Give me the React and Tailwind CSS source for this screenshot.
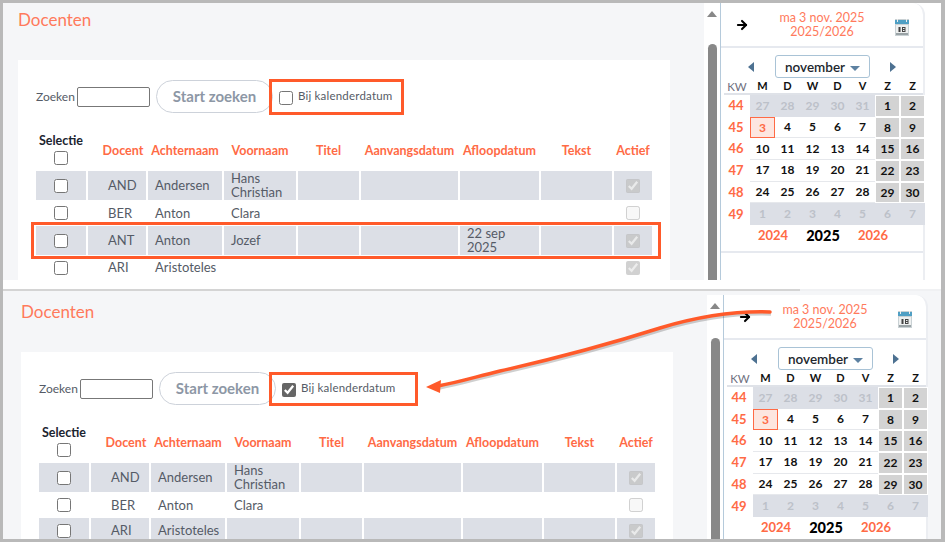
import { ArrowRight } from "lucide-react";

const columns = ["Docent", "Achternaam", "Voornaam", "Titel", "Aanvangsdatum", "Afloopdatum", "Tekst", "Actief"];

const firstRows = [
  { code: "AND", last: "Andersen", first: "Hans Christian", active: true, shaded: true, height: "h-[29px]" },
  { code: "BER", last: "Anton", first: "Clara", active: false, shaded: false, height: "h-[26px]" },
  { code: "ANT", last: "Anton", first: "Jozef", end: "22 sep 2025", active: true, shaded: true, height: "h-[29px]" },
  { code: "ARI", last: "Aristoteles", first: "", active: true, shaded: false, height: "h-[25px]" },
];

const secondRows = [
  { code: "AND", last: "Andersen", first: "Hans Christian", active: true, shaded: true, height: "h-[29px]" },
  { code: "BER", last: "Anton", first: "Clara", active: false, shaded: false, height: "h-[26px]" },
  { code: "ARI", last: "Aristoteles", first: "", active: true, shaded: true, height: "h-[25px]" },
];

const weeks = [
  { nr: 44, days: [27, 28, 29, 30, 31, 1, 2], muted: 5 },
  { nr: 45, days: [3, 4, 5, 6, 7, 8, 9], muted: 0 },
  { nr: 46, days: [10, 11, 12, 13, 14, 15, 16], muted: 0 },
  { nr: 47, days: [17, 18, 19, 20, 21, 22, 23], muted: 0 },
  { nr: 48, days: [24, 25, 26, 27, 28, 29, 30], muted: 0 },
  { nr: 49, days: [1, 2, 3, 4, 5, 6, 7], muted: 7 },
];

const gridCols = "grid grid-cols-[50px_10px_46px_74px_72px_61px_97px_79px_71px_38px] gap-x-[2px]";

const Check = ({ checked, disabled }) => (
  <input
    type="checkbox"
    defaultChecked={checked}
    disabled={disabled}
    className="w-[14px] h-[14px] m-0 accent-[#666666]"
  />
);

const DocentRow = ({ row }) => {
  const cell = `flex items-center px-[7px] leading-[14px] ${row.shaded ? "bg-[#dcdfe6]" : ""}`;
  return (
    <div className={`${gridCols} ${row.height} text-[13px] text-[#555b66]`}>
      <div className={`${cell} justify-center`}><Check /></div>
      <div className={cell}></div>
      <div className={`${cell} pl-[8px] pb-[1px]`}>{row.code}</div>
      <div className={`${cell} pb-[1px]`}>{row.last}</div>
      <div className={`${cell} pb-[1px]`}>{row.first}</div>
      <div className={cell}></div>
      <div className={cell}></div>
      <div className={`${cell} pb-[1px]`}>{row.end}</div>
      <div className={cell}></div>
      <div className={`${cell} justify-center`}><Check checked={row.active} disabled /></div>
    </div>
  );
};

const CalendarIcon = () => (
  <svg width="14" height="17" viewBox="0 0 14 17" className="shrink-0 mt-[5px]">
    <rect x="0" y="0" width="14" height="17" fill="#c9d1d4" />
    <rect x="0" y="1" width="14" height="4" fill="#4f9fc4" />
    <rect x="2" y="0" width="1" height="3" fill="#eeeeee" />
    <rect x="11" y="0" width="1" height="3" fill="#eeeeee" />
    <rect x="1" y="6" width="12" height="10" fill="#eef0f0" />
    <rect x="3.5" y="8" width="2" height="5" fill="#444444" />
    <rect x="7" y="8" width="3.5" height="5" fill="#444444" />
    <rect x="8" y="9" width="1.5" height="1" fill="#eef0f0" />
    <rect x="8" y="11" width="1.5" height="1" fill="#eef0f0" />
    <rect x="1" y="14" width="12" height="2" fill="#9aa3a6" />
  </svg>
);

const MiniCalendar = () => (
  <div className="w-[205px] shrink-0 h-full bg-white rounded-tr-xl border-l border-l-[#b5cadb] border-r-2 border-r-[#eceef2]">
    <div className="h-[45px] flex items-center border-b-2 border-[#e6e9ef] pl-[14px] pr-[14px]">
      <ArrowRight size={14} strokeWidth={3.5} className="text-black shrink-0" />
      <div className="flex-1 text-center text-[12.5px] leading-[14px] text-[#ff7a5c]">
        <div>ma 3 nov. 2025</div>
        <div>2025/2026</div>
      </div>
      <CalendarIcon />
    </div>
    <div className="flex items-center h-[23px] mt-[7px] pl-[27px]">
      <span className="w-0 h-0 border-y-[5px] border-y-transparent border-r-[6px] border-r-[#4d7191]"></span>
      <div className="ml-[21px] w-[95px] h-[23px] pt-[1px] flex items-center justify-center gap-[5px] rounded-[3px] border border-[#a9c3d6] text-[13.5px] font-semibold text-[#22272e]">
        november
        <span className="w-0 h-0 mt-[3px] border-x-[5px] border-x-transparent border-t-[5px] border-t-[#5d81a1]"></span>
      </div>
      <span className="ml-[20px] w-0 h-0 border-y-[5px] border-y-transparent border-l-[6px] border-l-[#4d7191]"></span>
    </div>
    <div className="pl-[3px]">
      <div className="grid grid-cols-[26px_repeat(7,25px)] h-[17px] items-center text-center text-[11px] font-bold text-[#111111] border-b-2 border-[#dfe2e8]">
        <span className="font-normal text-[#6f7080] text-[11.5px]">KW</span>
        {["M", "D", "W", "D", "V", "Z", "Z"].map((d, i) => <span key={i}>{d}</span>)}
      </div>
      {weeks.map((w) => (
        <div key={w.nr} className="grid grid-cols-[26px_repeat(7,25px)] h-[21.7px] text-center text-[12px] font-bold">
          <span className="self-center pr-[2px] text-[13px] text-[#ff6a45]">{w.nr}</span>
          {w.days.map((d, i) => {
            const muted = i < w.muted;
            const weekend = i > 4 && !muted;
            const today = w.nr === 45 && d === 3;
            let tone = "text-[#111111] border-b border-[#e6e8ec]";
            if (muted) tone = "bg-[#dcdfe6] text-[#bcc1c9]";
            else if (weekend) tone = "bg-[#d3d3d3] text-[#111111] border border-white";
            else if (today) tone = "bg-[#fde6e0] text-[#ff6a45] border border-[#ff6a45]";
            return <span key={i} className={`flex items-center justify-center ${tone}`}>{d}</span>;
          })}
        </div>
      ))}
      <div className="grid grid-cols-[24px_50px_50px_50px] h-[14px] items-center text-center text-[13px] font-bold text-[#ff6a45]">
        <span></span>
        <span>2024</span>
        <span className="text-black text-[14.5px] font-black">2025</span>
        <span>2026</span>
      </div>
    </div>
    <div className="mt-[12px] h-[2px] bg-[#e6e9ef]"></div>
  </div>
);

const Panel = ({ rows, checked, second }) => (
  <div className={`flex ${second ? "h-[248px] pt-[4px] bg-[#f5f6f8]" : "h-[277px] bg-white"} overflow-hidden`}>
    <main className={`${second ? "w-[704px] pl-[18px]" : "w-[701px] pl-[15px]"} shrink-0 h-full bg-[#f5f6f8]`}>
      <h1 className="h-[57px] pt-[7px] text-[17px] leading-[20px] font-normal text-[#ff7a5c]">Docenten</h1>
      <div className="w-[652px] bg-white pt-[20px] pl-[18px] h-[220px]">
        <div className="flex items-center h-[33px] text-[12px] text-[#555b66]">
          <span className="w-[41px]">Zoeken</span>
          <input type="text" className="w-[73px] h-[20px] border border-[#777777] rounded-[2px] bg-white" />
          <button className="ml-[6px] w-[117px] h-[33px] rounded-full border border-[#cdd2da] text-[15px] font-bold text-[#8d97a5]">Start zoeken</button>
          <span className="ml-[6px] flex items-center">
            <span className="flex mt-[2px]"><Check checked={checked} /></span>
            <span className="ml-[5px] text-[11.5px] tracking-[0.2px] -mt-[2px]">Bij kalenderdatum</span>
          </span>
        </div>
        <div className={`${gridCols} h-[44px] pt-[4px] mt-[14px] items-center text-center text-[12.5px] font-bold text-[#ff6a45]`}>
          <div className="flex flex-col items-center text-[#1c2430] -mt-[5px]">
            <span>Selectie</span>
            <Check />
          </div>
          <div></div>
          {columns.map((c) => <div key={c} className="whitespace-nowrap">{c}</div>)}
        </div>
        {rows.map((r) => <DocentRow key={r.code} row={r} />)}
      </div>
    </main>
    <div className="w-[16px] shrink-0 bg-white flex flex-col items-center h-full">
      <span className="mt-[8px] w-0 h-0 border-x-[5px] border-x-transparent border-b-[6px] border-b-[#888888]"></span>
      <span className={`${second ? "mt-[29px]" : "mt-[27px]"} w-[9px] flex-1 rounded-t-full bg-[#888888]`}></span>
    </div>
    <MiniCalendar />
  </div>
);

export default function App() {
  return (
    <div className="relative w-[945px] h-[542px] overflow-hidden bg-[#b9b9b9] pt-[3px] pl-[3px] pr-[4px] pb-[3px] font-['Lato','Open_Sans',sans-serif]">
      <Panel rows={firstRows} checked={false} />
      <div className="h-[9px] bg-white"></div>
      <div className="h-[2px] bg-[#f0f1f3]">
        <div className="w-[797px] h-[2px] bg-[#d4d4d4]"></div>
      </div>
      <Panel rows={secondRows} checked second />

      {/* annotations drawn over the screenshots */}
      <div className="absolute left-[269px] top-[79px] w-[135px] h-[36px] border-[3px] border-[#ff5a2a]"></div>
      <div className="absolute left-[31px] top-[222px] w-[630px] h-[37px] border-[3px] border-[#ff5a2a]"></div>
      <div className="absolute left-[269px] top-[372px] w-[149px] h-[34px] border-[3px] border-[#ff5a2a]"></div>
      <svg className="absolute left-0 top-0 pointer-events-none" width="945" height="542" viewBox="0 0 945 542">
        <path d="M770 312 C 740 311, 700 316, 660 328 C 600 347, 540 362, 500 371 C 475 377, 460 382, 438 386" fill="none" stroke="#00000030" strokeWidth="3.5" transform="translate(1 2)" />
        <path d="M770 312 C 740 311, 700 316, 660 328 C 600 347, 540 362, 500 371 C 475 377, 460 382, 438 386" fill="none" stroke="#ff5a2a" strokeWidth="3.5" strokeLinecap="round" />
        <path d="M426 387 L441 380 L440 393 Z" fill="#ff5a2a" />
      </svg>
    </div>
  );
}
